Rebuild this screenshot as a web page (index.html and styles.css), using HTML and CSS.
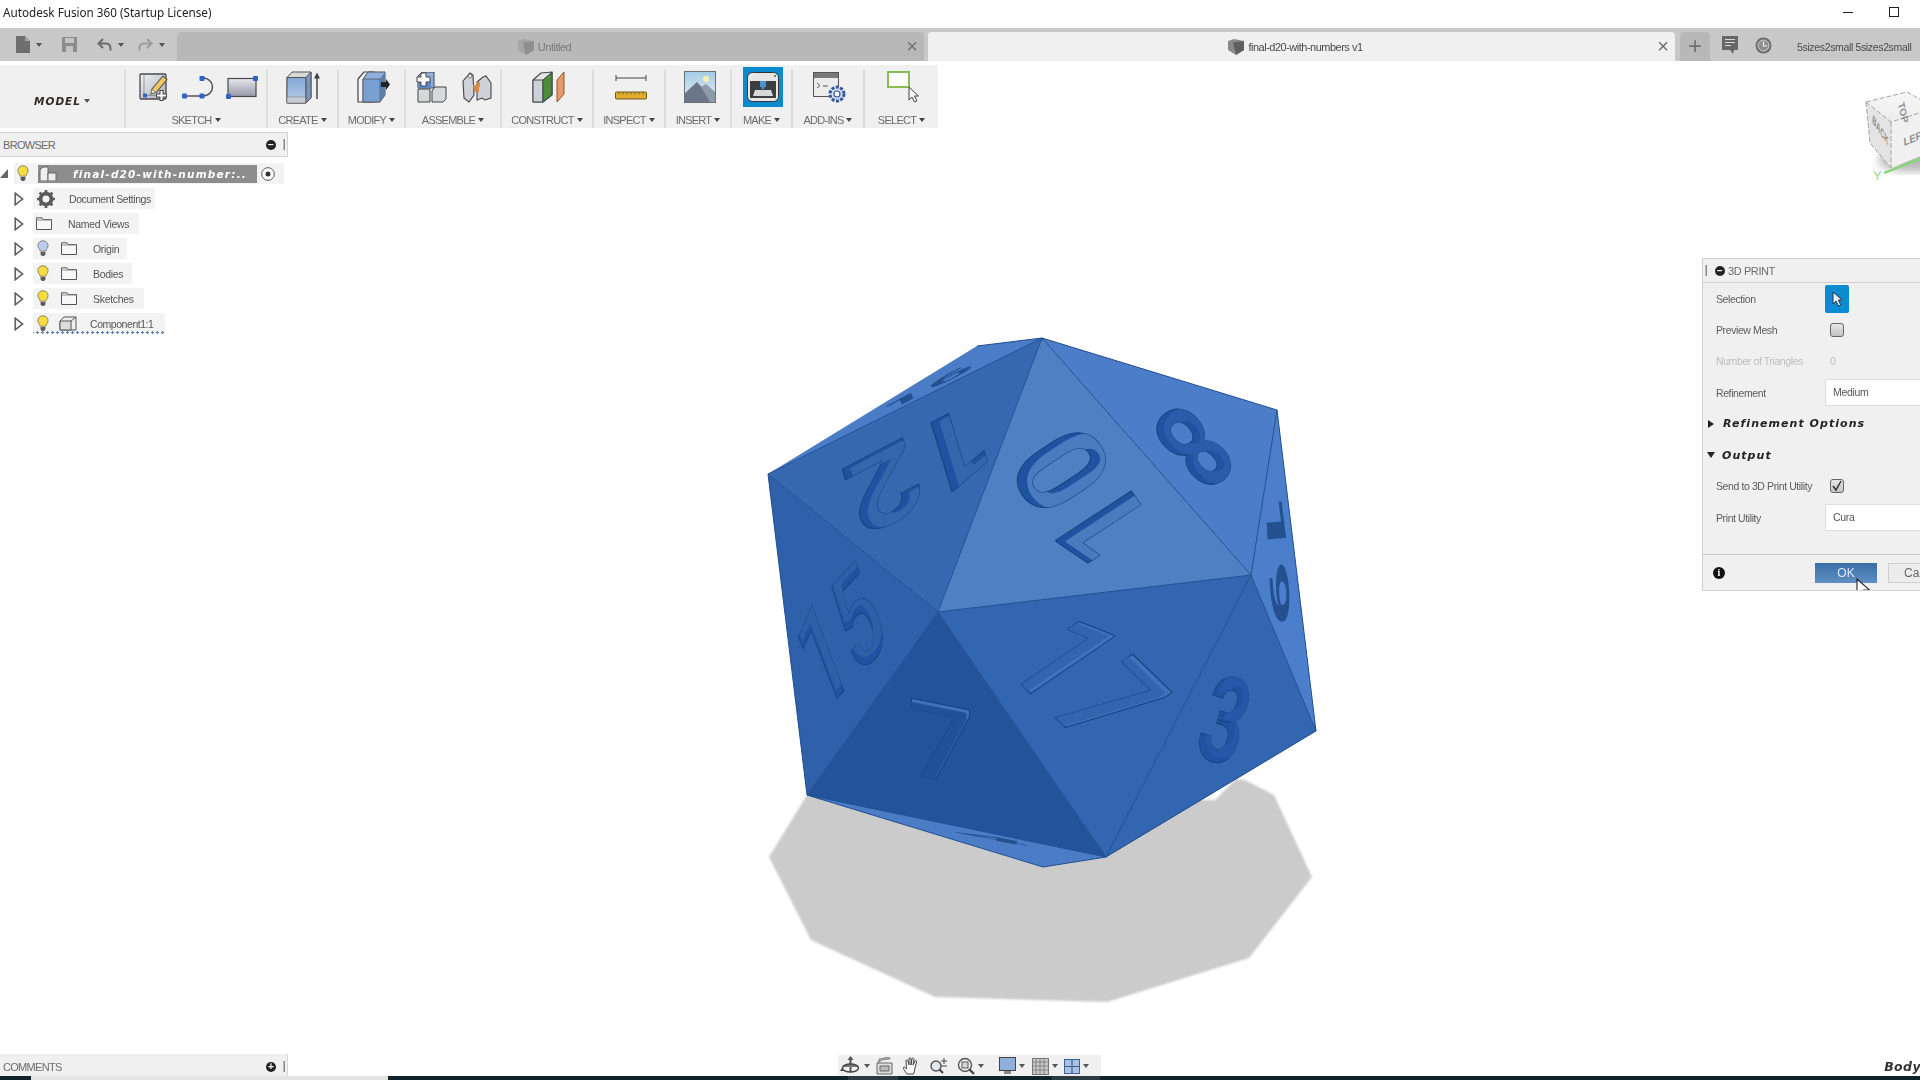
FILE: index.html
```html
<!DOCTYPE html>
<html lang="en">
<head>
<meta charset="utf-8">
<title>Autodesk Fusion 360</title>
<link rel="stylesheet" href="styles.css">
</head>
<body>
<svg width="0" height="0" class="defs">
  <defs>
    <symbol id="bulb" viewBox="0 0 12 17"><path d="M6 .8C2.900 .8.900 3 .900 5.600c0 2.300 1.700 3.200 2.300 5.600h5.600c.6-2.400 2.300-3.300 2.300-5.600C11.100 3 9.100.8 6 .8z" fill="currentColor" stroke="#77705a" stroke-width=".8"/><path d="M3.600 12h4.800v2.600L7 16H5l-1.400-1.400z" fill="#5c5c5c"/></symbol>
    <symbol id="folder" viewBox="0 0 16 13"><path d="M.5 12.500V.8h5.500l1 1.700h8.500v10z" fill="#f7f7f7" stroke="#555"/><path d="M.5 3h15" stroke="#888"/></symbol>
    <symbol id="tri" viewBox="0 0 10 14"><path d="M1.200 1.200L8.600 7l-7.400 5.800z" fill="#f4f4f4" stroke="#5a5a5a" stroke-width="1.500"/></symbol>
  </defs>
</svg>

<div class="page">
  <svg class="scene" width="1920" height="1080" viewBox="0 0 1920 1080">
    <defs>
      <filter id="soft"><feGaussianBlur stdDeviation="1.200"/></filter>
      <filter id="softer"><feGaussianBlur stdDeviation="4"/></filter>
      <text id="t10" class="digit" text-anchor="middle" y="42">10</text>
      <text id="t12" class="digit" text-anchor="middle" y="42">12</text>
      <text id="t8" class="digit" text-anchor="middle" y="42">8</text>
      <text id="t15" class="digit digit-m" text-anchor="middle" y="42">15</text>
      <text id="t7" class="digit digit-m" text-anchor="middle" y="42">7</text>
      <text id="t17" class="digit digit-m" text-anchor="middle" y="42">17</text>
      <text id="t3" class="digit" text-anchor="middle" y="42">3</text>
      <text id="t19" class="digit" text-anchor="middle" y="42">19</text>
      <clipPath id="c10"><use href="#t10"/></clipPath>
      <clipPath id="c12"><use href="#t12"/></clipPath>
      <clipPath id="c8"><use href="#t8"/></clipPath>
      <clipPath id="c15"><use href="#t15"/></clipPath>
      <clipPath id="c7"><use href="#t7"/></clipPath>
      <clipPath id="c17"><use href="#t17"/></clipPath>
      <clipPath id="c3"><use href="#t3"/></clipPath>
      <linearGradient id="cubeTop" x1="0" y1="0" x2="0" y2="1"><stop offset="0" stop-color="#f7f7f7"/><stop offset="1" stop-color="#ececec"/></linearGradient>
    </defs>

    <polygon class="shadow" points="769,857 807,795 1215,800 1236,779 1245,780 1274,795 1312,877 1249,958 1107,1002 935,997 811,940"/>

    <polygon class="f-top" points="1042,338 977,346 768,474"/>
    <polygon class="f-12" points="1042,338 768,474 938,612"/>
    <polygon class="f-10" points="1042,338 938,612 1251,575"/>
    <polygon class="f-8" points="1042,338 1251,575 1277,410"/>
    <polygon class="f-15" points="768,474 938,612 807,795"/>
    <polygon class="f-7" points="938,612 807,795 1106,857"/>
    <polygon class="f-17" points="938,612 1251,575 1106,857"/>
    <polygon class="f-3" points="1251,575 1106,857 1316,731"/>
    <polygon class="f-side" points="1277,410 1251,575 1316,731"/>
    <polygon class="f-bot" points="807,795 1106,857 1043,867"/>

    <g class="edges">
      <path d="M1042 338L768 474M1042 338L938 612M1042 338L1251 575M1042 338L1277 410M768 474L938 612M768 474L807 795M938 612L1251 575M938 612L807 795M938 612L1106 857M1251 575L1106 857M1251 575L1277 410M1251 575L1316 731M807 795L1106 857M1106 857L1316 731M1277 410L1316 731M807 795L1043 867L1106 857M977 346L1042 338"/>
    </g>

    <g transform="matrix(-.58,-.82,.9,-.59,1081,498)"><use href="#t10" class="wall"/><g clip-path="url(#c10)"><use href="#t10" class="fl-10" transform="translate(-6,7)"/></g></g>
    <g transform="matrix(-1.05,.55,-.25,-.82,919,469)"><use href="#t12" class="wall"/><g clip-path="url(#c12)"><use href="#t12" class="fl-12" transform="translate(-7,-3)"/></g></g>
    <g transform="matrix(-.58,.48,-.69,-.76,1194,447)"><use href="#t8" class="wall"/><g clip-path="url(#c8)"><use href="#t8" class="fl-8" transform="translate(-8,-4)"/></g></g>
    <g transform="matrix(.52,-.55,.38,1,840,636)"><use href="#t15" class="wall"/><g clip-path="url(#c15)"><use href="#t15" class="fl-15" transform="translate(3,-6)"/></g></g>
    <g transform="matrix(1,.2,0,.9,941,742)"><use href="#t7" class="wall wall-light"/><g clip-path="url(#c7)"><use href="#t7" class="fl-7" transform="translate(-3,4)"/></g></g>
    <g transform="matrix(.68,.66,-1,.68,1088,680)"><use href="#t17" class="wall wall-light"/><g clip-path="url(#c17)"><use href="#t17" class="fl-17" transform="translate(-4,4)"/></g></g>
    <g transform="matrix(.62,.18,-.28,.98,1225,720)"><use href="#t3" class="wall"/><g clip-path="url(#c3)"><use href="#t3" class="fl-3" transform="translate(8,-6)"/></g></g>
    <use href="#t19" class="thin" transform="matrix(.05,1,-.22,.02,1278,560)"/>
    <text class="digit thin" text-anchor="middle" y="42" transform="matrix(.69,-.35,.03,.07,927,388)">16</text>
    <text class="digit thin" text-anchor="middle" y="42" transform="matrix(1.2,.22,-.01,.04,991,838)">4</text>

    <!-- view cube -->
    <ellipse cx="1912" cy="160" rx="34" ry="12" fill="#b9b9b9" filter="url(#softer)"/>
    <polygon points="1866,102 1907,92 1935,108 1891,122" fill="url(#cubeTop)"/>
    <polygon points="1866,102 1891,122 1891,168 1870,143" fill="#e4e4e4"/>
    <polygon points="1891,122 1935,108 1935,150 1891,168" fill="#f0f0f0"/>
    <path d="M1866 102L1907 92L1935 108M1866 102L1891 122L1935 108M1866 102L1870 143L1891 168M1891 122V168" class="cube-edge"/>
    <text class="cube-label" transform="matrix(.2,.9,-.8,.35,1898,104)">TOP</text>
    <text class="cube-label" transform="matrix(.5,.75,-.1,1,1872,122)">BACK</text>
    <text class="cube-label" transform="matrix(.85,-.35,.08,1,1904,146)">LEFT</text>
    <path d="M1884 173L1920 159" class="axis"/>
    <text class="axis-label" x="1873" y="180">Y</text>
  </svg>

  <header class="title">
    <span class="title-text">Autodesk Fusion 360 (Startup License)</span>
    <span class="win-min"></span>
    <span class="win-max"></span>
  </header>

  <nav class="tabs">
    <div class="qat">
      <svg class="qat-doc" width="14" height="17" viewBox="0 0 14 17"><path d="M0 0h9l5 5v12H0z" fill="#6e6e6e"/><path d="M9 0v5h5z" fill="#a6a6a6"/></svg>
      <span class="caret"></span>
      <svg class="qat-save" width="15" height="15" viewBox="0 0 15 15"><path d="M0 0h15v15H0z" fill="#8c8c8c"/><path d="M3 1h9v5H3z" fill="#c4c4c4"/><path d="M4 9h7v6H4z" fill="#c4c4c4"/></svg>
      <svg class="qat-undo" width="15" height="15" viewBox="0 0 15 15"><path d="M6 2L1.500 6.500 6 11M2 6.500h7c3.500 0 5 2.500 4.500 7" fill="none" stroke="#6a6a6a" stroke-width="2"/></svg>
      <span class="caret"></span>
      <svg class="qat-redo" width="15" height="15" viewBox="0 0 15 15"><path d="M9 2l4.500 4.500L9 11M13 6.500H6c-3.500 0-5 2.500-4.500 7" fill="none" stroke="#9c9c9c" stroke-width="2"/></svg>
      <span class="caret caret-light"></span>
    </div>
    <div class="tab tab-idle">
      <span class="tab-label">
        <svg width="16" height="16" viewBox="0 0 16 16"><path d="M0 2l6-2 10 2v9l-8 5-8-5z" fill="#a5a5a5"/><path d="M5 3.500L16 2v9l-8 5z" fill="#8e8e8e"/></svg>
        Untitled
      </span>
      <span class="tab-close">×</span>
    </div>
    <div class="tab tab-active">
      <span class="tab-label">
        <svg width="16" height="16" viewBox="0 0 16 16"><path d="M0 2l6-2 10 2v9l-8 5-8-5z" fill="#8a8a8a"/><path d="M5 3.500L16 2v9l-8 5z" fill="#5f5f5f"/></svg>
        final-d20-with-numbers v1
      </span>
      <span class="tab-close">×</span>
    </div>
    <div class="tab-plus">+</div>
    <svg class="msg" width="16" height="19" viewBox="0 0 16 19"><path d="M0 0h16v14h-4l-1 4-3-4H0z" fill="#676767"/><path d="M3 3.500h10M3 6.500h10M3 9.500h6" stroke="#d8d8d8" stroke-width="1.200"/></svg>
    <svg class="clock" width="17" height="17" viewBox="0 0 17 17"><circle cx="8.500" cy="8.500" r="8" fill="#6c6c6c"/><circle cx="8.500" cy="8.500" r="5.500" fill="#8d8d8d" stroke="#d4d4d4"/><path d="M8.500 4.500v4.500h3.500" fill="none" stroke="#f0f0f0" stroke-width="1.200"/></svg>
    <span class="user">5sizes2small 5sizes2small</span>
  </nav>

  <section class="toolbar">
    <div class="group g-model"><span class="model">MODEL</span><span class="caret"></span></div>

    <div class="group g-sketch">
      <div class="icons icons-sketch">
        <svg width="30" height="30" viewBox="0 0 30 30"><defs><linearGradient id="gs" x1="0" y1="0" x2="1" y2="1"><stop offset="0" stop-color="#f4f4f6"/><stop offset="1" stop-color="#a6aab6"/></linearGradient></defs><rect x="1" y="2" width="26" height="25" rx="1" fill="url(#gs)" stroke="#48484e" stroke-width="1.300"/><path d="M5 3v20.500h20" fill="none" stroke="#777" stroke-width=".7"/><path d="M13 17L24 4l4 3.500-11 13-5 1.500z" fill="#f0c860" stroke="#555" stroke-width="1.100"/><path d="M13 17l3.500 3.500-4.500 1.500z" fill="#f6e7c6" stroke="#555" stroke-width=".6"/><rect x="4" y="21.500" width="4" height="4" fill="#2f63c6"/><path d="M22.500 18v11M17 23.500h11" stroke="#444" stroke-width="4"/><path d="M22.500 19v9M18 23.500h9" stroke="#fff" stroke-width="2"/></svg>
        <svg width="33" height="23" viewBox="0 0 33 23"><path d="M3 20h18M21 2c14-.5 14 18.500 0 18" fill="none" stroke="#555" stroke-width="1.500"/><rect x="1" y="17.500" width="5" height="5" rx="1" fill="#2f63c6"/><rect x="18.500" y="17.500" width="5" height="5" rx="1" fill="#2f63c6"/><rect x="18.500" y="0" width="5" height="5" rx="1" fill="#2f63c6"/></svg>
        <svg width="32" height="23" viewBox="0 0 32 23"><defs><linearGradient id="gr" x1="0" y1="0" x2="0" y2="1"><stop offset="0" stop-color="#e6e7ee"/><stop offset="1" stop-color="#9599a6"/></linearGradient></defs><rect x="2" y="2.500" width="28" height="18" fill="url(#gr)" stroke="#4a4a4a" stroke-width="1.200"/><rect x="0" y="18" width="5" height="5" rx="1" fill="#2f63c6"/><rect x="27" y="0" width="5" height="5" rx="1" fill="#2f63c6"/></svg>
      </div>
      <span class="label">SKETCH<span class="caret"></span></span>
    </div>

    <div class="group g-create">
      <div class="icons">
        <svg width="36" height="33" viewBox="0 0 36 33"><defs><linearGradient id="gc" x1="0" y1="0" x2="0" y2="1"><stop offset="0" stop-color="#82a8d6"/><stop offset="1" stop-color="#b9cde6"/></linearGradient></defs><path d="M1 6.500L6 1h19v26l-5 5H1z" fill="#d8d8d8" stroke="#555" stroke-width="1"/><path d="M1 6.500h19V32H1z" fill="url(#gc)" stroke="#555" stroke-width="1"/><path d="M1 26h19v6H1z" fill="#c9cdd3" stroke="#777" stroke-width=".6"/><path d="M20 6.500L25 1v26l-5 5z" fill="#7995ba" stroke="#555" stroke-width="1"/><path d="M31 6v22" stroke="#3e3e3e" stroke-width="1.400"/><path d="M31 1.500l-3 6h6z" fill="#3e3e3e"/></svg>
      </div>
      <span class="label">CREATE<span class="caret"></span></span>
    </div>

    <div class="group g-modify">
      <div class="icons">
        <svg width="33" height="32" viewBox="0 0 33 32"><path d="M1 8l6-7h10v30H1z" fill="#f4f4f4" stroke="#444" stroke-width="1.200"/><path d="M6 8l5-7h17v23l-5 7H6z" fill="#8fb0dc" stroke="#555" stroke-width="1"/><path d="M6 8h17v23H6z" fill="#79a0d2" stroke="#555" stroke-width=".8"/><path d="M23 8l5-7v23l-5 7z" fill="#5a7da9"/><path d="M24 11h5v-3l4 5.500-4 5.500v-3h-5z" fill="#222"/></svg>
      </div>
      <span class="label">MODIFY<span class="caret"></span></span>
    </div>

    <div class="group g-assemble">
      <div class="icons icons-pair">
        <svg width="32" height="31" viewBox="0 0 32 31"><path d="M3 17h12v13H3z" fill="#d6d8dc" stroke="#444" stroke-width="1"/><path d="M17 19l3-4h11v12l-3 3H17z" fill="#d6d8dc" stroke="#444" stroke-width="1"/><path d="M7 0h12v16H3V4z" fill="#8fb0dc" stroke="#444" stroke-width="1"/><path d="M3 9h13v7H3z" fill="#5d87c4"/><path d="M6 1v4H2v5h4v4h5v-4h4V5h-4V1z" fill="#fff" stroke="#444" stroke-width="1"/></svg>
        <svg width="30" height="31" viewBox="0 0 30 31"><path d="M1 9l7-8 3 2 1 20-5 7-5-4z" fill="#cfd2d8" stroke="#444" stroke-width="1.100"/><path d="M29 11l-5-7-3 1-6 5v18l5-2 3 2 6-2z" fill="#cfd2d8" stroke="#444" stroke-width="1.100"/><path d="M11 13h6v7h-5zM15 10h3v5h-3z" fill="#d88c44"/><circle cx="8" cy="4" r="1.800" fill="#fff" stroke="#555" stroke-width=".7"/></svg>
      </div>
      <span class="label">ASSEMBLE<span class="caret"></span></span>
    </div>

    <div class="group g-construct">
      <div class="icons">
        <svg width="33" height="32" viewBox="0 0 33 32"><path d="M1 9L9 2l11-1v23l-9 7H1z" fill="#e6e6e6" stroke="#444" stroke-width="1.100"/><path d="M1 9h10v22H1z" fill="#cdd0d6" stroke="#444" stroke-width="1"/><path d="M11 9l9-8v23l-9 7z" fill="#4f8c3a" stroke="#345" stroke-width="1"/><path d="M25 9l7-8v22l-7 8z" fill="#e59a68" stroke="#8a5a33" stroke-width="1"/></svg>
      </div>
      <span class="label">CONSTRUCT<span class="caret"></span></span>
    </div>

    <div class="group g-inspect">
      <div class="icons">
        <svg width="32" height="25" viewBox="0 0 32 25"><path d="M1 3h30M1 0v6M31 0v6" fill="none" stroke="#444" stroke-width="1"/><rect x="0.500" y="17" width="31" height="7" rx="1" fill="#e2ad2e" stroke="#6c5a2a" stroke-width="1"/><path d="M4 17v2.500M8 17v2.500M12 17v2.500M16 17v2.500M20 17v2.500M24 17v2.500M28 17v2.500" stroke="#6c5a2a" stroke-width=".8"/></svg>
      </div>
      <span class="label">INSPECT<span class="caret"></span></span>
    </div>

    <div class="group g-insert">
      <div class="icons">
        <svg width="32" height="32" viewBox="0 0 32 32"><defs><linearGradient id="gsky" x1="0" y1="0" x2="0" y2="1"><stop offset="0" stop-color="#a4cbe6"/><stop offset="1" stop-color="#e8f0f4"/></linearGradient></defs><rect x=".5" y=".5" width="31" height="31" fill="url(#gsky)" stroke="#6f6f6f"/><circle cx="22" cy="8" r="3" fill="#fbefb0"/><path d="M1 22l12-11 17 18v2H1z" fill="#6c7689"/><path d="M17 16l5-3 9 8v10H26z" fill="#8d9aa8"/></svg>
      </div>
      <span class="label">INSERT<span class="caret"></span></span>
    </div>

    <div class="group g-make">
      <div class="icons">
        <div class="make-box">
          <svg width="32" height="30" viewBox="0 0 32 30"><rect x=".5" y=".5" width="31" height="29" rx="5" fill="#e7e7e7" stroke="#333"/><rect x="3" y="9" width="26" height="17" fill="#3e3e3e"/><path d="M6 24l2-6h16l2 6z" fill="#d8d8d8"/><rect x="13" y="9" width="6" height="6" fill="#4d8fd0"/><path d="M14.500 15h3L16 19z" fill="#4d8fd0"/><rect x="27" y="3" width="2" height="2" fill="#3ca43c"/></svg>
        </div>
      </div>
      <span class="label">MAKE<span class="caret"></span></span>
    </div>

    <div class="group g-addins">
      <div class="icons">
        <svg width="33" height="31" viewBox="0 0 33 31"><rect x=".5" y=".5" width="25" height="24" fill="#ececec" stroke="#555"/><rect x="1" y="1" width="24" height="5" fill="#7a7a7a"/><path d="M4 11l3 2.500L4 16M10 14h5" fill="none" stroke="#555"/><circle cx="24" cy="22" r="7" fill="#cfdbee" stroke="#35579a" stroke-width="3" stroke-dasharray="3 1.500"/><circle cx="24" cy="22" r="3" fill="#fff" stroke="#35579a" stroke-width="1.200"/></svg>
      </div>
      <span class="label">ADD-INS<span class="caret"></span></span>
    </div>

    <div class="group g-select">
      <div class="icons">
        <svg width="33" height="32" viewBox="0 0 33 32"><rect x="1" y="1" width="21" height="15" fill="#fdfdfd" stroke="#7cb544" stroke-width="1.800"/><path d="M22 16v13l3-3 2.500 5 2.500-1.200-2.500-4.800h4z" fill="#f4f4f4" stroke="#444"/></svg>
      </div>
      <span class="label">SELECT<span class="caret"></span></span>
    </div>
  </section>

  <main class="work">
    <aside class="browser">
      <div class="panel-head">
        <span class="panel-title">BROWSER</span>
        <span class="round-btn">−</span>
        <span class="grip"></span>
      </div>
      <ul class="tree">
        <li class="node node-root">
          <span class="tri-dark"></span>
          <span class="row row-root">
            <svg class="bulb on" width="12" height="17"><use href="#bulb"/></svg>
            <span class="root-name">
              <svg width="18" height="15" viewBox="0 0 18 15"><path d="M1 4l3-3h5v14H1z" fill="#eee" stroke="#666"/><path d="M9 15V7h8v8z" fill="#eee" stroke="#666"/></svg>
              <span class="root-text">final-d20-with-number:..</span>
            </span>
            <svg class="target" width="14" height="14" viewBox="0 0 14 14"><circle cx="7" cy="7" r="6.300" fill="#fff" stroke="#555" stroke-width="1"/><circle cx="7" cy="7" r="2.500" fill="#333"/></svg>
          </span>
        </li>
        <li class="node">
          <svg class="tri" width="10" height="14"><use href="#tri"/></svg>
          <span class="row r-doc">
            <svg class="gear" width="18" height="18" viewBox="0 0 16 16"><circle cx="8" cy="8" r="4.800" fill="none" stroke="#5a5a5a" stroke-width="3.400"/><path d="M8 0v16M0 8h16M2.300 2.300l11.400 11.400M13.700 2.300L2.300 13.700" stroke="#5a5a5a" stroke-width="2.400" stroke-dasharray="3 10 3"/></svg>
            <span class="name name-doc">Document Settings</span>
          </span>
        </li>
        <li class="node">
          <svg class="tri" width="10" height="14"><use href="#tri"/></svg>
          <span class="row r-views">
            <svg class="folder-a" width="16" height="13"><use href="#folder"/></svg>
            <span class="name name-views">Named Views</span>
          </span>
        </li>
        <li class="node">
          <svg class="tri" width="10" height="14"><use href="#tri"/></svg>
          <span class="row r-origin">
            <svg class="bulb" width="12" height="17"><use href="#bulb"/></svg>
            <svg class="folder-b" width="16" height="13"><use href="#folder"/></svg>
            <span class="name">Origin</span>
          </span>
        </li>
        <li class="node">
          <svg class="tri" width="10" height="14"><use href="#tri"/></svg>
          <span class="row r-bodies">
            <svg class="bulb on" width="12" height="17"><use href="#bulb"/></svg>
            <svg class="folder-b" width="16" height="13"><use href="#folder"/></svg>
            <span class="name">Bodies</span>
          </span>
        </li>
        <li class="node">
          <svg class="tri" width="10" height="14"><use href="#tri"/></svg>
          <span class="row r-sketches">
            <svg class="bulb on" width="12" height="17"><use href="#bulb"/></svg>
            <svg class="folder-b" width="16" height="13"><use href="#folder"/></svg>
            <span class="name">Sketches</span>
          </span>
        </li>
        <li class="node">
          <svg class="tri" width="10" height="14"><use href="#tri"/></svg>
          <span class="row r-comp">
            <svg class="bulb on" width="12" height="17"><use href="#bulb"/></svg>
            <svg class="comp" width="18" height="15" viewBox="0 0 18 15"><path d="M1 5l4-4h12v13H1z" fill="#eee" stroke="#555"/><path d="M1 5h11v9H1zM12 5l5-4" fill="#ddd" stroke="#555"/></svg>
            <span class="name name-comp">Component1:1</span>
          </span>
        </li>
      </ul>
    </aside>

    <aside class="print">
      <div class="print-head">
        <span class="grip"></span>
        <span class="round-btn">−</span>
        <span class="print-title">3D PRINT</span>
      </div>
      <div class="field">
        <span class="field-label">Selection</span>
        <span class="select-btn"><svg width="11" height="16" viewBox="0 0 11 16"><path d="M1 1v12l3-3 2.500 5 2.300-1-2.500-5h4z" fill="#e8eef4" stroke="#334"/></svg></span>
      </div>
      <div class="field">
        <span class="field-label">Preview Mesh</span>
        <span class="check"></span>
      </div>
      <div class="field field-off">
        <span class="field-label">Number of Triangles</span>
        <span class="count">0</span>
      </div>
      <div class="field">
        <span class="field-label">Refinement</span>
        <span class="input">Medium</span>
      </div>
      <div class="field section">
        <span class="arrow-right"></span>
        <span class="section-name">Refinement Options</span>
      </div>
      <div class="field section">
        <span class="arrow-down"></span>
        <span class="section-name">Output</span>
      </div>
      <div class="field">
        <span class="field-label">Send to 3D Print Utility</span>
        <span class="check"><svg width="14" height="14" viewBox="0 0 14 14"><path d="M3 7l3 4 5-9" fill="none" stroke="#333" stroke-width="1.500"/></svg></span>
      </div>
      <div class="field">
        <span class="field-label">Print Utility</span>
        <span class="input">Cura</span>
      </div>
      <div class="print-foot">
        <span class="info">i</span>
        <span class="btn-ok">OK</span>
        <span class="btn-cancel">Cancel</span>
        <svg class="cursor" width="14" height="22" viewBox="0 0 14 22"><path d="M1 1v16l4-4 3 7 3-1.300-3-6.700h5.500z" fill="#fff" stroke="#222" stroke-width="1.100"/></svg>
      </div>
    </aside>

    <div class="bottom">
      <div class="comments">
        <span class="panel-title">COMMENTS</span>
        <span class="round-btn">+</span>
        <span class="grip"></span>
      </div>
      <div class="nav">
        <svg width="21" height="20" viewBox="0 0 21 20"><path d="M10.500 1v15" stroke="#555" stroke-width="2"/><path d="M10.500 0l-3 4h6z" fill="#555"/><path d="M3 10h15" stroke="#777" stroke-width="2"/><ellipse cx="10.500" cy="12" rx="8" ry="4" fill="none" stroke="#444" stroke-width="1.500"/><path d="M2 12l-2 3h4z" fill="#444"/></svg>
        <span class="caret"></span>
        <svg class="n-film" width="17" height="18" viewBox="0 0 17 18"><path d="M1 6h15v11H1z" fill="#ddd" stroke="#666"/><path d="M4 9h9v5H4z" fill="#bbb" stroke="#666"/><path d="M2 6l1-4 10-2 1 2-8 1z" fill="#aaa" stroke="#666" stroke-width=".6"/></svg>
        <svg class="n-hand" width="17" height="18" viewBox="0 0 17 18"><path d="M4 17c-2-3-4-5-3.500-6.500s2 .5 3 1.500L3 4c0-1.500 1.500-1.500 2 0l1 4V2c0-1.500 2-1.500 2 0v6l1-6c.3-1.500 2-1 2 .3L10 8l2-4c.6-1 2-.5 1.600.8L12 11c-.5 3-1 5-1.500 6z" fill="#fafafa" stroke="#444" stroke-width="1"/></svg>
        <svg class="n-zoom" width="18" height="18" viewBox="0 0 18 18"><circle cx="7" cy="9" r="5" fill="#dfe9f2" stroke="#555" stroke-width="1.400"/><path d="M10.500 12.500L14 16" stroke="#444" stroke-width="2.200"/><path d="M12 4h6M15 1v6M12 9h6" stroke="#444"/></svg>
        <svg class="n-fit" width="18" height="18" viewBox="0 0 18 18"><circle cx="8" cy="8" r="6.500" fill="#eef1f4" stroke="#555" stroke-width="1.400"/><rect x="5" y="5" width="6" height="6" fill="#d6d6d6" stroke="#555"/><path d="M12.500 12.500L17 17" stroke="#444" stroke-width="2.400"/></svg>
        <span class="caret"></span>
        <svg class="n-disp" width="17" height="18" viewBox="0 0 17 18"><rect x=".5" y=".5" width="16" height="13" fill="#8fb0dc" stroke="#444"/><path d="M5 14h7v3H5z" fill="#888"/></svg>
        <span class="caret"></span>
        <svg class="n-grid" width="17" height="17" viewBox="0 0 17 17"><rect x=".5" y=".5" width="16" height="16" fill="#c8c8c8" stroke="#777"/><path d="M4 0v17M8 0v17M12 0v17M0 4h17M0 8h17M0 12h17" stroke="#777" stroke-width=".8"/></svg>
        <span class="caret"></span>
        <svg class="n-view" width="16" height="15" viewBox="0 0 16 15"><rect x=".5" y=".5" width="15" height="14" fill="#a9c2e4" stroke="#3e5f96"/><path d="M8 0v15M0 7.500h16" stroke="#3e5f96" stroke-width="1.200"/></svg>
        <span class="caret"></span>
      </div>
      <span class="body-tag">Body</span>
    </div>
  </main>

  <footer class="strip">
    <span class="s-dark s-a"></span>
    <span class="s-pale"></span>
    <span class="s-dark s-b"></span>
    <span class="s-mid s-c"></span>
    <span class="s-dark s-d"></span>
    <span class="s-mid s-e"></span>
    <span class="s-dark s-f"></span>
  </footer>
</div>
</body>
</html>
```

FILE: styles.css
```css
* { box-sizing: border-box; }
html, body { margin: 0; padding: 0; background: #fff; }
body { font-family: "Liberation Sans", Arial, sans-serif; overflow: hidden; }
ul { list-style: none; margin: 0; padding: 0; }
.defs { position: absolute; }

.page {
  position: relative;
  width: 1920px;
  height: 1080px;
  display: flex;
  flex-direction: column;
  overflow: hidden;
  background: #fff;
}
.scene { position: absolute; inset: 0; }

.digit { font: 700 118px Roboto, "Liberation Sans", sans-serif; }
.digit-m { font-weight: 500; }
.shadow { fill: #cbcbcb; filter: url(#soft); }
.f-top, .f-bot { fill: #4b7cc6; }
.f-12 { fill: #3568ae; }
.f-10 { fill: #4e80c3; }
.f-8 { fill: #4c7dc8; }
.f-15 { fill: #2f61ab; }
.f-7 { fill: #23539b; }
.f-17 { fill: #3266b0; }
.f-3 { fill: #3366b0; }
.f-side { fill: #4c7fcb; }
.edges path { fill: none; stroke: #1f4d92; stroke-width: 1; }
.wall { fill: #1f52a0; stroke: #17437f; stroke-width: 1; }
.wall-light { fill: #3f72bb; stroke: #163f7e; }
.fl-10 { fill: #4a7bbe; }
.fl-12 { fill: #3466ac; }
.fl-8 { fill: #2a5cab; }
.fl-15 { fill: #2e60a8; }
.fl-7 { fill: #22519a; }
.fl-17 { fill: #3165ae; }
.fl-3 { fill: #2558a8; }
.thin { fill: #23508f; }
.cube-edge { fill: none; stroke: #a4a4a4; stroke-width: 1; stroke-dasharray: 5 2; }
.cube-label { font: 700 11px "Liberation Sans", sans-serif; fill: #8e8e8e; }
.axis { stroke: #7fd86c; stroke-width: 2; }
.axis-label { font: 13px "Liberation Sans", sans-serif; fill: #8fe07c; }

.title, .tabs, .toolbar, .work, .strip { position: relative; }
.title {
  height: 28px;
  flex: none;
  display: flex;
  align-items: center;
  padding-left: 3px;
  filter: blur(.3px);
}
.title-text { font: 11.700px "Noto Sans", sans-serif; color: #222; flex: 1; padding-bottom: 4px; }
.win-min { width: 10px; height: 1px; background: #222; margin: 0 36px 4px 0; }
.win-max { width: 10px; height: 10px; border: 1.500px solid #222; margin: 0 21px 4px 0; }

.tabs {
  height: 33px;
  flex: none;
  display: flex;
  align-items: flex-end;
  background: #c8c8c8;
  filter: blur(.35px);
}
.qat { width: 177px; height: 29px; display: flex; align-items: center; padding: 0 0 4px 16px; }
.qat .caret { margin-left: 6px; }
.qat-save { margin-left: 20px; }
.qat-undo { margin-left: 20px; }
.qat-redo { margin-left: 14px; }
.caret-light { border-top-color: #999; }
.caret {
  display: inline-block;
  width: 0;
  height: 0;
  border-left: 3px solid transparent;
  border-right: 3px solid transparent;
  border-top: 4px solid #555;
  vertical-align: 2px;
  margin-left: 3px;
}
.tab {
  position: relative;
  width: 747px;
  height: 29px;
  border-radius: 4px 4px 0 0;
  display: flex;
  align-items: center;
  justify-content: center;
  padding-right: 12px;
  font-size: 11px;
  letter-spacing: -.5px;
}
.tab-idle { background: #b8b8b8; color: #7a7a7a; margin-right: 4px; }
.tab-active { background: #f0f0f0; color: #4a4a4a; }
.tab-label { display: flex; align-items: center; gap: 4px; }
.tab-close { position: absolute; right: 6px; top: 4px; font-size: 20px; line-height: 20px; color: #6f6f6f; letter-spacing: 0; }
.tab-idle .tab-close { color: #707070; }
.tab-plus {
  width: 30px;
  height: 29px;
  margin-left: 5px;
  background: #b8b8b8;
  border-radius: 4px 4px 0 0;
  color: #707070;
  font-size: 24px;
  line-height: 28px;
  text-align: center;
}
.msg { margin: 0 0 6px 12px; }
.clock { margin: 0 0 7px 17px; }
.user { margin: 0 0 8px 25px; font-size: 10.500px; letter-spacing: -.35px; color: #4c4c4c; white-space: nowrap; }

.toolbar {
  width: 938px;
  height: 63px;
  margin-top: 4px;
  flex: none;
  display: flex;
  background: #f0f0f0;
  filter: blur(.35px);
}
.group {
  position: relative;
  height: 58px;
  margin-top: 5px;
  display: flex;
  flex-direction: column;
  align-items: center;
  border-right: 2px solid #dcdcdc;
}
.group:last-child { border-right: 0; }
.icons { height: 40px; margin-top: -3px; padding-left: 3px; display: flex; align-items: center; justify-content: center; gap: 15px; flex: none; }
.icons-sketch { gap: 12px; padding-left: 4px; }
.icons-pair { padding-left: 0; }
.label { font-size: 11px; letter-spacing: -.75px; color: #6c6c6c; white-space: nowrap; line-height: 13px; margin-top: 7px; }
.label .caret { border-top-color: #444; letter-spacing: 0; }
.g-model { width: 126px; flex-direction: row; justify-content: center; padding: 4px 0 0; }
.model { font: italic 700 10.500px "DejaVu Sans", sans-serif; letter-spacing: 1px; color: #2e2a28; }
.g-sketch { width: 142px; }
.g-create { width: 71px; }
.g-modify { width: 67px; }
.g-assemble { width: 96px; }
.g-construct { width: 92px; }
.g-inspect { width: 72px; }
.g-insert { width: 66px; }
.g-make { width: 61px; }
.g-addins { width: 72px; }
.g-select { width: 73px; }
.make-box {
  width: 40px;
  height: 40px;
  background: #0b8ad0;
  display: flex;
  align-items: center;
  justify-content: center;
}

.work { flex: 1; min-height: 0; display: flex; flex-direction: column; }

.browser { width: 288px; margin-top: 4px; filter: blur(.35px); }
.panel-head, .comments {
  height: 25px;
  display: flex;
  align-items: center;
  background: #f0f0f0;
  padding: 0 2px 0 3px;
}
.panel-head { border: 1px solid #d2d2d2; border-left: 0; }
.panel-title { flex: 1; font-size: 11px; letter-spacing: -.7px; color: #6c6c6c; }
.round-btn {
  width: 10px;
  height: 10px;
  border-radius: 50%;
  background: #222;
  color: #fff;
  font: 700 10px/10px "Liberation Sans", sans-serif;
  text-align: center;
  flex: none;
}
.grip { width: 2px; height: 11px; margin-left: 7px; background: #bbb; border-right: 1px solid #888; flex: none; }

.tree { margin-top: 4px; }
.node { height: 25px; display: flex; align-items: center; padding-left: 14px; }
.node-root { padding-left: 0; }
.tri { margin-right: 9px; flex: none; }
.tri-dark { width: 0; height: 0; border-bottom: 9px solid #666; border-left: 8px solid transparent; margin-right: 6px; flex: none; }
.row { height: 21px; display: flex; align-items: center; background: #f3f3f3; padding-left: 3px; }
.row-root { width: 270px; padding-left: 2px; gap: 9px; }
.root-name { width: 219px; height: 18px; display: flex; align-items: center; background: #8d8d8d; flex: none; gap: 16px; padding-left: 1px; }
.root-text { font: italic 700 10.500px "DejaVu Sans", sans-serif; letter-spacing: 1.200px; color: #fff; white-space: nowrap; }
.target { margin-left: -5px; flex: none; }
.bulb { flex: none; margin-left: 1px; color: #b8cdf0; }
.bulb.on { color: #f6dc3c; }
.name { font-size: 10.500px; letter-spacing: -.3px; color: #555; white-space: nowrap; }
.folder-a { margin-left: 0; }
.folder-b { margin-left: 12px; margin-right: 16px; }
.gear { margin-left: 1px; flex: none; }
.name-doc { margin-left: 14px; letter-spacing: -.4px; }
.name-views { margin-left: 16px; }
.comp { margin-left: 10px; margin-right: 13px; }
.name-comp { padding-right: 4px; letter-spacing: -.45px; }
.r-comp { background-image: radial-gradient(circle, #5a7fb0 1px, transparent 1.300px); background-size: 5px 3px; background-position: 17px 100%; background-repeat: repeat-x; }
.r-doc { width: 122px; }
.r-views { width: 106px; }
.r-origin { width: 94px; }
.r-bodies { width: 99px; }
.r-sketches { width: 111px; }
.r-comp { width: 132px; }

.print {
  position: absolute;
  left: 1702px;
  top: 130px;
  width: 218px;
  height: 333px;
  background: #f0f0f0;
  border: 1px solid #d0d0d0;
  border-right: 0;
  overflow: hidden;
  filter: blur(.35px);
}
.print-head { height: 24px; display: flex; align-items: center; border-bottom: 1px solid #d0d0d0; padding-left: 2px; }
.print-head .grip { margin: 0 8px 0 0; }
.print-title { font-size: 11px; letter-spacing: -.4px; color: #6c6c6c; margin-left: 3px; }
.field { height: 31.300px; display: flex; align-items: center; padding-left: 13px; }
.field-label { width: 109px; flex: none; font-size: 10.500px; letter-spacing: -.4px; color: #5c5c5c; white-space: nowrap; }
.field-off .field-label, .count { color: #bdbdbd; }
.count { font-size: 10.500px; margin-left: 5px; }
.select-btn { width: 24px; height: 28px; background: #0b8bd0; border-radius: 2px; display: flex; align-items: center; justify-content: center; }
.check { width: 14px; height: 14px; margin-left: 5px; border: 1px solid #666; border-radius: 3px; background: linear-gradient(#e6e6e6, #c4c4c4); position: relative; display: flex; }
.check svg { flex: none; margin: -1px; }
.input { flex: 1; height: 27px; margin-right: -4px; background: #fff; border: 1px solid #dedede; font-size: 10.500px; letter-spacing: -.3px; color: #555; line-height: 25px; padding-left: 7px; }
.section { padding-left: 4px; }
.arrow-right { width: 0; height: 0; border-left: 6px solid #222; border-top: 4px solid transparent; border-bottom: 4px solid transparent; margin-right: 9px; margin-left: 1px; }
.arrow-down { width: 0; height: 0; border-top: 6px solid #222; border-left: 4px solid transparent; border-right: 4px solid transparent; margin-right: 7px; }
.section-name { font: italic 700 11px "DejaVu Sans", sans-serif; letter-spacing: 1.050px; color: #222; white-space: nowrap; }
.print-foot { position: relative; height: 37px; margin-top: 21px; border-top: 1px solid #c8c8c8; display: flex; align-items: center; padding-left: 10px; }
.info { width: 12px; height: 12px; border-radius: 50%; background: #111; color: #fff; font: 700 10px/12px "Liberation Serif", serif; text-align: center; flex: none; }
.btn-ok { width: 62px; height: 20px; margin-left: 90px; background: linear-gradient(#3b6ea8, #5f8fc2); color: #dfe8f2; font-size: 12px; line-height: 20px; text-align: center; flex: none; }
.btn-cancel { width: 62px; height: 20px; margin-left: 11px; background: #ececec; border: 1px solid #cfcfcf; color: #666; font-size: 12px; line-height: 18px; padding-left: 15px; flex: none; }
.cursor { position: absolute; left: 153px; top: 23px; }

.bottom { margin-top: auto; height: 22px; display: flex; align-items: stretch; }
.comments { width: 288px; height: 22px; padding-top: 3px; border-right: 1px solid #d8d8d8; filter: blur(.35px); flex: none; }
.nav {
  width: 263px;
  margin-left: 550px;
  height: 21px;
  margin-top: 1px;
  background: #f0f0f0;
  display: flex;
  align-items: center;
  padding: 1px 0 0 2px;
  filter: blur(.3px);
}
.nav .caret { margin-left: 3px; flex: none; }
.nav svg { flex: none; }
.n-film { margin-left: 6px; }
.n-hand { margin-left: 10px; }
.n-zoom { margin-left: 9px; }
.n-fit { margin-left: 10px; }
.n-disp { margin-left: 15px; }
.n-grid { margin-left: 7px; }
.n-view { margin-left: 6px; }
.body-tag { margin-left: auto; font: italic 700 12.500px "DejaVu Sans", sans-serif; color: #333; letter-spacing: .4px; line-height: 25px; filter: blur(.4px); margin-right: -1px; }

.strip { height: 4px; flex: none; display: flex; }
.s-dark { background: #10222a; }
.s-mid { background: #2a3b42; }
.s-pale { width: 357px; background: #e4e4e4; }
.s-a { width: 31px; }
.s-b { width: 460px; }
.s-c { width: 50px; }
.s-d { width: 154px; }
.s-e { width: 48px; }
.s-f { flex: 1; }
```
